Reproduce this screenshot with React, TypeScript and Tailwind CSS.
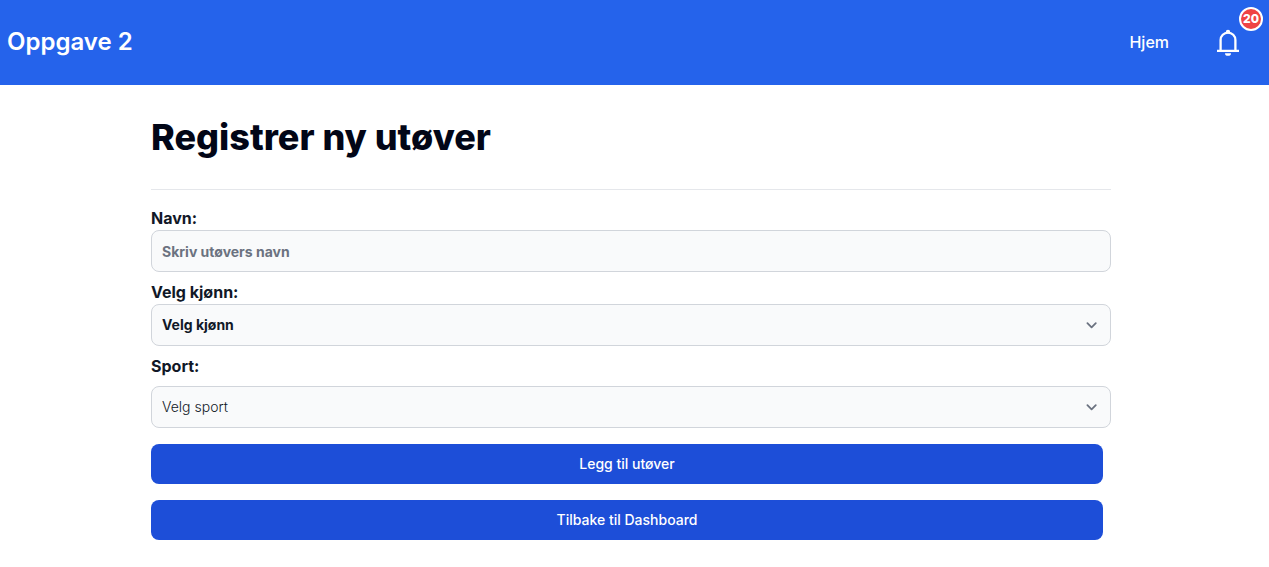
import type { ReactNode } from "react";

const field =
  "block h-[42px] w-full appearance-none rounded-lg border border-[#d1d5db] bg-[#f9fafb] px-2.5 text-sm text-[#111827] placeholder:text-[#6b7280] placeholder:opacity-100";

function SelectField({ id, className, children }: { id: string; className: string; children: ReactNode }) {
  return (
    <div className="grid items-center">
      <select id={id} className={`${field} col-start-1 row-start-1 ${className}`}>
        {children}
      </select>
      <svg
        aria-hidden="true"
        viewBox="0 0 10 6"
        className="pointer-events-none col-start-1 row-start-1 mr-3.5 h-1.5 w-2.5 justify-self-end overflow-visible"
        fill="none"
        stroke="#6b7280"
        strokeWidth="1.8"
        strokeLinecap="round"
        strokeLinejoin="round"
      >
        <path d="m.4 1.2 4.2 4.2 4.2-4.2" />
      </svg>
    </div>
  );
}

function Navbar() {
  return (
    <nav className="flex h-[85px] items-center justify-between bg-[#2563eb] pr-[25px] pb-0.5 pl-[7px] text-white">
      <a href="#" className="text-2xl font-semibold">
        Oppgave 2
      </a>
      <div className="flex items-center gap-[43px]">
        <a href="#" className="font-medium">
          Hjem
        </a>
        <button type="button" aria-label="Varsler" className="relative">
          <svg aria-hidden="true" viewBox="0 0 32 32" className="size-8" fill="none" stroke="currentColor">
            <path strokeWidth="2.3" d="M5 24.8h22M8.6 24.8V14a7.4 7.4 0 0 1 14.8 0v10.8" />
            <path fill="currentColor" stroke="none" d="M13.8 7.4V5.9a2.2 2.2 0 0 1 4.4 0v1.5ZM13 27.2h6a3 2.6 0 0 1-6 0Z" />
          </svg>
          <span className="absolute -top-[19px] -right-[19px] flex size-6 items-center justify-center rounded-full border-2 border-white bg-[#ef4444] text-xs font-extrabold">
            20
          </span>
        </button>
      </div>
    </nav>
  );
}

export default function App() {
  const button =
    "block h-10 w-full rounded-lg bg-[#1d4ed8] text-center text-sm font-medium text-white hover:bg-[#1e40af]";
  return (
    <div className="min-h-screen bg-white font-[Inter,sans-serif] text-[#020617]">
      <Navbar />
      <div className="pr-[7px]">
        <main className="mx-auto w-full max-w-[960px] pt-8">
          <h1 className="text-4xl font-extrabold">Registrer ny utøver</h1>
          <hr className="mt-8 border-[#e5e7eb]" />
          <form className="pt-4 text-[#111827]">
            <label htmlFor="navn" className="block font-bold">
              Navn:
            </label>
            <input id="navn" type="text" className={`${field} font-bold`} placeholder="Skriv utøvers navn" />
            <label htmlFor="kjonn" className="mt-2 block font-bold">
              Velg kjønn:
            </label>
            <SelectField id="kjonn" className="font-bold">
              <option>Velg kjønn</option>
            </SelectField>
            <label htmlFor="sport" className="mt-2 mb-2 block font-bold">
              Sport:
            </label>
            <SelectField id="sport" className="font-light">
              <option>Velg sport</option>
            </SelectField>
            <div className="mt-4 flex flex-col gap-4 pr-2">
              <button type="button" className={button}>
                Legg til utøver
              </button>
              <button type="button" className={button}>
                Tilbake til Dashboard
              </button>
            </div>
          </form>
        </main>
      </div>
    </div>
  );
}
